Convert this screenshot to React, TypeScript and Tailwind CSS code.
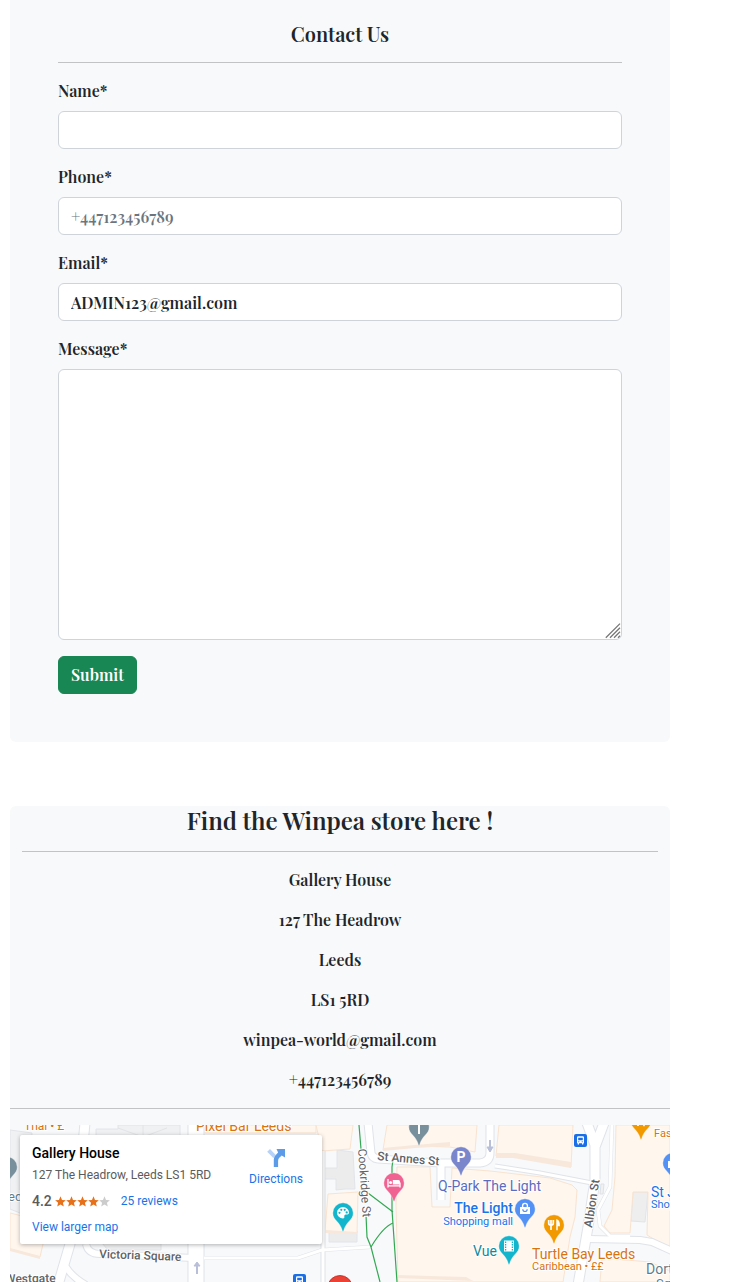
import type { ReactNode } from "react";

const serif =
  "font-['Playfair_Display','Liberation_Serif',serif] font-semibold text-[#212529]";

const fieldClass =
  "block w-full rounded-md border border-[#ced4da] bg-white px-3 py-1.5 text-base leading-6 text-[#212529] placeholder:text-[#6c757d] placeholder:opacity-100 focus:border-[#86b7fe] focus:outline-none";

function Field({ id, label, children }: { id: string; label: string; children: ReactNode }) {
  return (
    <div className="mb-4">
      <label htmlFor={id} className="mb-2 block text-base leading-6">
        {label}
      </label>
      {children}
    </div>
  );
}

function ContactForm() {
  return (
    <section className="rounded-b-md bg-[#f8f9fa] px-12 pt-[22px] pb-12">
      <h1 className="mb-4 text-center text-xl leading-6">Contact Us</h1>
      <hr className="mb-4 border-[#c1c3c5]" />
      <form onSubmit={(e) => e.preventDefault()}>
        <Field id="name" label="Name*">
          <input id="name" type="text" className={`${fieldClass} h-[38px]`} />
        </Field>
        <Field id="phone" label="Phone*">
          <input id="phone" type="tel" placeholder="+447123456789" className={`${fieldClass} h-[38px]`} />
        </Field>
        <Field id="email" label="Email*">
          <input id="email" type="email" defaultValue="ADMIN123@gmail.com" className={`${fieldClass} h-[38px]`} />
        </Field>
        <Field id="message" label="Message*">
          <div className="relative">
            <textarea
              id="message"
              className={`${fieldClass} h-[271px] resize-y [&::-webkit-resizer]:bg-transparent`}
            />
            <svg
              viewBox="0 0 16 16"
              className="pointer-events-none absolute right-px bottom-px size-4"
              aria-hidden="true"
            >
              <path d="M.8 14.800L15 .6M5 14.800L15 4.800M9 14.800L15 8.800M13 14.800L15 12.800" stroke="#777" strokeWidth="1.300" />
            </svg>
          </div>
        </Field>
        <button
          type="submit"
          className="rounded-md border border-[#198754] bg-[#198754] px-3 py-1.5 text-base leading-6 text-white"
        >
          Submit
        </button>
      </form>
    </section>
  );
}

function Pin({ x, y, color, children }: { x: number; y: number; color: string; children?: ReactNode }) {
  return (
    <g transform={`translate(${x} ${y})`}>
      <path
        d="M0-10.2A10.2 10.2 0 0 0-10.2 0C-10.2 3.6-8.6 5.6-6.4 8C-3.4 11.2-1.6 14-.7 17.6Q0 19.4.7 17.6C1.6 14 3.4 11.2 6.4 8C8.6 5.6 10.2 3.6 10.2 0A10.2 10.2 0 0 0 0-10.2Z"
        fill={color}
        stroke="#fff"
        strokeOpacity=".6"
        strokeWidth=".6"
      />
      {children}
    </g>
  );
}

function BusStop({ x, y }: { x: number; y: number }) {
  return (
    <g transform={`translate(${x} ${y})`}>
      <rect width="13" height="13" rx="2" fill="#1a6fe6" />
      <path
        fillRule="evenodd"
        fill="#fff"
        d="M4.3 2.3h4.4q1.3 0 1.3 1.3v5.600h-.7v1.300H8V9.200H5v1.300H3.700V9.200H3V3.600Q3 2.300 4.300 2.300ZM4.200 3.800v2.400h4.600V3.800ZM4.300 7.200v1h1v-1ZM7.700 7.200v1h1v-1Z"
      />
    </g>
  );
}

function Fork() {
  return (
    <g fill="none" stroke="#fff">
      <path d="M-5.300-5v3.200q0 1.800 2.300 1.800T-.7-1.800V-5M-3-5v10" strokeWidth="1.700" />
      <path d="M3 5.200v-10q2.200 1 2.200 5.300H3" strokeWidth="1.500" fill="#fff" />
    </g>
  );
}

function Bag() {
  return (
    <g>
      <path d="M-5-2H5V5H-5Z" fill="#fff" />
      <path d="M-2.400-1.800V-3.200a2.400 2.400 0 0 1 4.800 0v1.400" fill="none" stroke="#fff" strokeWidth="1.400" />
      <path d="M-2.200 .3a2.200 2.200 0 0 0 4.400 0" fill="none" stroke="#5491f5" strokeWidth="1.200" />
    </g>
  );
}

function StreetMap() {
  return (
    <svg
      viewBox="0 0 660 157"
      preserveAspectRatio="xMinYMin slice"
      className="block h-full w-full font-[Roboto,sans-serif] font-normal"
      role="img"
      aria-label="Street map"
    >
      <rect width="660" height="157" fill="#f7f9fb" />

      <g stroke="#e2e4e8" fill="#f0f1f2">
        <path d="M0 5L22 8 18 70 10 88 0 84Z" />
        <path d="M86 12V4h22V0h62v12Z" />
        <path d="M108 3l25 9 24-9M133 12V0" fill="none" />
        <path d="M92 118H151V125H98Z" fill="#eeeff0" />
        <path d="M327 25L343 27 345 64H335L326 65V54H314V43H327Z" fill="#ececed" />
        <path d="M319 106H347V117H319Z" fill="#ececed" />
        <path d="M623 67H638L635 97 621 96Z" fill="#eeeeee" />
      </g>

      <g stroke="#f9e3cf" fill="#fff6ee">
        <path d="M0 88L12 91 33 119 30 132 0 124Z" />
        <path d="M195 0H306V8H195Z" />
        <path d="M306 0H343L340 24 312 26Z" />
        <path d="M318 69L348 67 347 108 315 106Z" />
        <path d="M377 0H467L465 27 440 22 405 21 373 25Z" />
        <path d="M489 0H563L561 42 503 30 486 31Z" />
        <path d="M387 42L420 42 422 82H440L442 43 480 46 540 53 562 60 567 65 565 92 560 112 553 157H388L386 80Z" />
        <path d="M606 0H660V124L637 110 638 67H623L620 108H600L594 101 602 85 605 52Z" />
        <path d="M592 133L640 137 660 146V157H590Z" />
      </g>
      <g fill="#f7e8db">
        <path d="M373 23L405 20 440 17V21L405 23 373 26Z" />
        <path d="M486 28L505 28 561 37V43L503 33H486Z" />
        <path d="M388 150L420 151 456 152 463 156 388 153Z" />
        <path d="M0 123L30 131V134L0 126Z" />
        <path d="M315 105L347 107V109L315 108Z" />
      </g>

      <g fill="none" stroke="#e0e3e8" strokeLinejoin="round">
        <path d="M75-2L70 50 60 119 48 160" strokeWidth="11" />
        <path d="M76 119Q78 129 90 129L184 133M56 142Q62 152 76 160" strokeWidth="8" />
        <path d="M186-2V160" strokeWidth="17" />
        <path d="M194 133H288L312 125 360 122" strokeWidth="4" />
        <path d="M313 26V160" strokeWidth="5" />
        <path d="M358-2L361 28Q362 33 368 34L430 38H470Q480 37 480 28V-2M431 40V75" strokeWidth="9" />
        <path d="M485 41L530 48 582 58" strokeWidth="5" />
        <path d="M577-2L585 20V55L578 102 568 160M594-2L585 22" strokeWidth="11" />
        <path d="M602-2L600 62 588 85 590 101 600 111H620" strokeWidth="4" />
        <path d="M578 114L630 115 642 117 662 126" strokeWidth="8" />
      </g>
      <g fill="none" stroke="#fff" strokeLinejoin="round">
        <path d="M75-2L70 50 60 119 48 160" strokeWidth="9" />
        <path d="M76 119Q78 129 90 129L184 133M56 142Q62 152 76 160" strokeWidth="6" />
        <path d="M186-2V160" strokeWidth="15" />
        <path d="M194 133H288L312 125 360 122" strokeWidth="3" />
        <path d="M313 26V160" strokeWidth="3" />
        <path d="M358-2L361 28Q362 33 368 34L430 38H470Q480 37 480 28V-2M431 40V75" strokeWidth="7" />
        <path d="M485 41L530 48 582 58" strokeWidth="3" />
        <path d="M577-2L585 20V55L578 102 568 160M594-2L585 22" strokeWidth="9" />
        <path d="M602-2L600 62 588 85 590 101 600 111H620" strokeWidth="3" />
        <path d="M578 114L630 115 642 117 662 126" strokeWidth="6" />
      </g>
      <path d="M591 59h3l-1 10h-3Z" fill="#f0f1f2" stroke="#dfe1e5" />

      <g fill="none" stroke="#34a853" strokeWidth="1.200">
        <path d="M349 0L351 24M356 90L357 112 361 122 370 157" />
        <path d="M358 68L383 87M383 98Q373 102 361 122" />
        <path d="M383 35L382 42V85L387 157" />
      </g>

      <g stroke="#b9bfd8" strokeWidth="2" fill="#b9bfd8">
        <path d="M187 149V140" />
        <path d="M184 141L187 137 190 141Z" strokeWidth="1" />
        <path d="M480 15V23" />
        <path d="M477 22L480 27 483 22Z" strokeWidth="1" />
      </g>

      <Pin x={-3} y={42} color="#78909c" />
      <Pin x={409} y={2} color="#78909c">
        <path d="M-4-5H4M0-5V7" stroke="#fff" strokeWidth="2" />
      </Pin>
      <Pin x={451} y={32} color="#7986cb">
        <text y="5" textAnchor="middle" fontSize="14" fontWeight="700" fill="#fff">P</text>
      </Pin>
      <Pin x={384} y={58} color="#f06292">
        <path d="M-6-4V4.500M-6 2.800H6M6 4.500V-.5" stroke="#fff" strokeWidth="1.300" fill="none" />
        <path d="M-1.200-3H4.500Q6-3 6-1.500V1.600H-1.200Z" fill="#fff" />
        <circle cx="-3.400" cy="-.4" r="1.500" fill="#fff" />
      </Pin>
      <Pin x={333} y={88} color="#12b5cb">
        <path
          d="M0-6A6 5.700 0 1 0 0 5.400Q1.900 5.400 1.300 3.400 1 1.600 2.800 1.600H4.300Q6 1.400 6-.3A6 5.700 0 0 0 0-6Z"
          fill="#fff"
        />
        <g fill="#12b5cb">
          <circle cx="-3.500" cy="-.2" r="1.100" />
          <circle cx="-1.700" cy="-3.200" r="1.100" />
          <circle cx="1.700" cy="-3.200" r="1.100" />
          <circle cx="3.700" cy="-.6" r="1.100" />
        </g>
      </Pin>
      <Pin x={515} y={84} color="#5491f5"><Bag /></Pin>
      <Pin x={499} y={121} color="#12b5cb">
        <rect x="-5" y="-5.500" width="10" height="11" fill="#fff" />
        <path d="M-3.400-4.500v9M3.400-4.500v9" stroke="#12b5cb" strokeWidth="1.300" strokeDasharray="1.400 1.100" />
      </Pin>
      <Pin x={544} y={100} color="#f29900"><Fork /></Pin>
      <Pin x={631} y={-4} color="#f29900"><Fork /></Pin>
      <Pin x={663} y={38} color="#5491f5"><Bag /></Pin>
      <BusStop x={564} y={9} />
      <BusStop x={283} y={149} />
      <circle cx="330" cy="163" r="12.500" fill="#ea4335" stroke="#c5221f" strokeWidth=".8" />

      <g stroke="#fff" strokeWidth="2" paintOrder="stroke" strokeLinejoin="round">
        <g fill="#d9730d">
          <text x="14" y="5" fontSize="12">Thai • £</text>
          <text x="186" y="6" fontSize="14">Pixel Bar Leeds</text>
          <text x="522" y="134" fontSize="14">Turtle Bay Leeds</text>
          <text x="522" y="145" fontSize="11">Caribbean • ££</text>
          <text x="644" y="12" fontSize="11">Fast food</text>
        </g>
        <g fill="#5f6368" fontWeight="500" fontSize="12">
          <text transform="translate(89 133) rotate(2)">Victoria Square</text>
          <text transform="translate(-5 158) rotate(-1)">Westgate</text>
          <text transform="translate(367 35) rotate(5)">St Annes St</text>
          <text transform="translate(348 24) rotate(86)" fontWeight="400">Cookridge St</text>
          <text transform="translate(582 103) rotate(-81)">Albion St</text>
        </g>
        <g fill="#5c6bc0" fontSize="14">
          <text x="428" y="66">Q-Park The Light</text>
        </g>
        <g fill="#1a73e8">
          <text x="503" y="88" fontSize="14" fontWeight="500" textAnchor="end">The Light</text>
          <text x="503" y="100" fontSize="11" textAnchor="end">Shopping mall</text>
          <text x="641" y="72" fontSize="14">St Johns</text>
          <text x="641" y="83" fontSize="11">Shopping</text>
        </g>
        <text x="463" y="131" fontSize="14" fill="#0e8a9c">Vue</text>
        <g fill="#607d8b">
          <text x="-2" y="76" fontSize="13">ed</text>
          <text x="636" y="149" fontSize="14">Dortmund</text>
          <text x="646" y="163" fontSize="13">Square</text>
        </g>
      </g>
    </svg>
  );
}

function Star({ filled }: { filled: boolean }) {
  return (
    <svg viewBox="0 0 24 24" className="size-[11px]" aria-hidden="true">
      <path
        d="M12 .8l3.300 7.700 8.300.7-6.300 5.500 1.900 8.200L12 18.600l-7.200 4.300 1.900-8.200L.4 9.200l8.300-.7Z"
        fill={filled ? "#e7711b" : "#ccc"}
      />
    </svg>
  );
}

function PlaceCard() {
  return (
    <div className="absolute top-2.5 left-2.5 flex w-[302px] justify-between rounded-xs bg-white px-3 pt-2 pb-[7px] font-[Roboto,sans-serif] text-[12px] font-normal text-[#5b5b5b] shadow-[0_1px_4px_rgba(0,0,0,0.3)]">
      <div>
        <div className="text-[14px] leading-5 font-medium text-black">Gallery House</div>
        <div className="mt-0.5 leading-5">127 The Headrow, Leeds LS1 5RD</div>
        <div className="mt-1.5 flex items-center leading-5">
          <span className="mr-[3px] text-[14px] font-medium">4.2</span>
          <span className="flex">
            {[1, 2, 3, 4, 5].map((n) => (
              <Star key={n} filled={n <= 4} />
            ))}
          </span>
          <a href="#reviews" className="ml-[11px] text-[#1a73e8]">25 reviews</a>
        </div>
        <a href="#map" className="mt-1.5 block leading-5 text-[#1a73e8]">View larger map</a>
      </div>
      <a href="#directions" className="mr-[7px] flex flex-col items-center self-start pt-1 leading-5 text-[#1a73e8]">
        <svg viewBox="0 0 22 22" className="size-[22px]" aria-hidden="true">
          <path d="M2.200 4.700L5 2l6 6.200L8.400 11Z" fill="#b7d2f8" />
          <path d="M8.800 20V12.500q0-2.600 2-4.500l2.300-2.400L11.500 2H20v8.400L16.700 8.600l-2.400 2.200q-1.200 1.200-1.200 3V20Z" fill="#5c9be8" />
        </svg>
        Directions
      </a>
    </div>
  );
}

const address = [
  "Gallery House",
  "127 The Headrow",
  "Leeds",
  "LS1 5RD",
  "winpea-world@gmail.com",
  "+447123456789",
];

export default function App() {
  return (
    <main className={`mr-[61px] ml-2.5 ${serif}`}>
      <ContactForm />
      <section className="mt-16 rounded-t-md bg-[#f8f9fa] text-center">
        <div className="px-3">
          <h2 className="mb-4 text-2xl leading-[29px]">Find the Winpea store here !</h2>
          <hr className="mb-4 border-[#c1c3c5]" />
          {address.map((line) => (
            <p key={line} className="mb-4 text-base leading-6">{line}</p>
          ))}
        </div>
        <hr className="mb-4 border-[#c1c3c5]" />
        <div className="relative h-[157px] overflow-hidden text-left">
          <StreetMap />
          <PlaceCard />
        </div>
      </section>
    </main>
  );
}
